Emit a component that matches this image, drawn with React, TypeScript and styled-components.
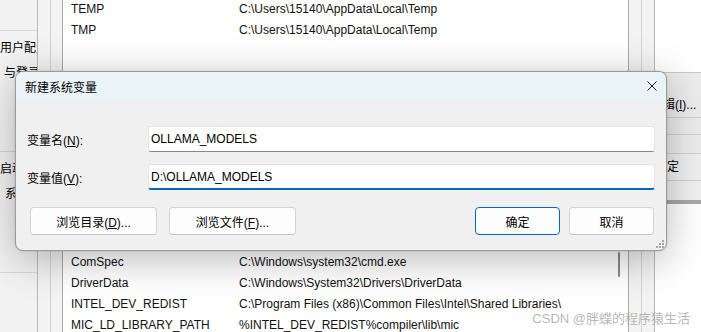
import React from "react";
import styled, { createGlobalStyle } from "styled-components";

const GlobalStyle = createGlobalStyle`
  html, body {
    margin: 0;
    padding: 0;
  }
  body {
    font-family: "Liberation Sans", "Noto Sans CJK SC", sans-serif;
    font-size: 12px;
    color: #000;
  }
`;

interface EnvVar {
  name: string;
  value: string;
}

const userVars: EnvVar[] = [
  { name: "TEMP", value: "C:\\Users\\15140\\AppData\\Local\\Temp" },
  { name: "TMP", value: "C:\\Users\\15140\\AppData\\Local\\Temp" },
];

const systemVars: EnvVar[] = [
  { name: "ComSpec", value: "C:\\Windows\\system32\\cmd.exe" },
  { name: "DriverData", value: "C:\\Windows\\System32\\Drivers\\DriverData" },
  {
    name: "INTEL_DEV_REDIST",
    value: "C:\\Program Files (x86)\\Common Files\\Intel\\Shared Libraries\\",
  },
  { name: "MIC_LD_LIBRARY_PATH", value: "%INTEL_DEV_REDIST%compiler\\lib\\mic" },
];

const Screen = styled.div`
  position: relative;
  width: 701px;
  height: 332px;
  overflow: hidden;
  display: flex;
  background: #fff;
`;

/* window behind, left edge */
const SideWindow = styled.div`
  width: 37px;
  flex: none;
  background: #f2f2f2;
  display: flex;
  flex-direction: column;
  overflow: hidden;
  white-space: nowrap;
`;

const SideSection = styled.div<{ $h: number }>`
  height: ${(p) => p.$h}px;
  flex: none;
  box-sizing: border-box;
  border-bottom: 1px solid #d6d6d6;
  padding-top: 5px;
`;

const SideText = styled.div<{ $indent?: number }>`
  line-height: 25px;
  padding-left: ${(p) => p.$indent ?? 0}px;
`;

/* environment variables window */
const EnvWindow = styled.div`
  width: 618px;
  flex: none;
  box-sizing: border-box;
  border-left: 1px solid #b8b8b8;
  border-right: 1px solid #b8b8b8;
  background: #f3f3f3;
  padding: 0 12px;
  display: flex;
`;

const GroupFrame = styled.div`
  flex: 1;
  border-left: 1px solid #d2d2d2;
  border-right: 1px solid #d2d2d2;
  padding: 0 12px 0 11px;
  display: flex;
`;

const ListBox = styled.div`
  flex: 1;
  background: #fff;
  border-left: 1px solid #a9a9a9;
  border-right: 1px solid #a9a9a9;
  display: flex;
  flex-direction: column;
`;

const VarList = styled.div<{ $top: number }>`
  position: relative;
  margin-top: ${(p) => p.$top}px;
`;

const VarRow = styled.div`
  display: grid;
  grid-template-columns: 168px 1fr;
  height: 21px;
  line-height: 21px;
  padding-left: 8px;
  white-space: nowrap;
  color: #111;
`;

const ScrollThumb = styled.div`
  position: absolute;
  right: 8px;
  top: 0;
  width: 2px;
  height: 25px;
  border-radius: 1px;
  background: #8a8a8a;
`;

/* window behind, right edge */
const BackWindow = styled.div`
  flex: 1;
  background: #fff;
  display: flex;
  flex-direction: column;
  overflow: hidden;
  white-space: nowrap;
`;

const BackBlock = styled.div<{ $h: number; $bg?: string; $line?: string }>`
  height: ${(p) => p.$h}px;
  flex: none;
  box-sizing: border-box;
  background: ${(p) => p.$bg ?? "transparent"};
  border-bottom: 1px solid ${(p) => p.$line ?? "#d0d0d0"};
  display: flex;
  align-items: flex-end;
`;

const BackLabel = styled.span<{ $shift?: number; $pad?: number }>`
  margin-left: ${(p) => p.$shift ?? 0}px;
  padding-bottom: ${(p) => p.$pad ?? 0}px;
  line-height: 16px;
`;

/* dialog */
const Dialog = styled.div`
  position: absolute;
  left: 15px;
  top: 71px;
  width: 652px;
  height: 180px;
  box-sizing: border-box;
  border: 1px solid #9c9c9c;
  border-radius: 8px;
  background: #f0f0f0;
  overflow: hidden;
  box-shadow: 0 8px 40px rgba(0, 0, 0, 0.28), 0 0 2px rgba(0, 0, 0, 0.2);
  display: flex;
  flex-direction: column;
`;

const TitleBar = styled.div`
  height: 28px;
  flex: none;
  background: #eaf3f6;
  display: flex;
  align-items: center;
  justify-content: space-between;
  padding: 0 9px 0 9px;
  font-size: 12px;
`;

const CloseButton = styled.span`
  display: flex;
  width: 10px;
  height: 10px;
`;

const DialogBody = styled.div`
  flex: 1;
  display: flex;
  flex-direction: column;
  padding: 26px 11px 0 11px;
  position: relative;
`;

const Field = styled.div`
  display: grid;
  grid-template-columns: 121px 1fr;
  align-items: center;
  height: 26px;
  & + & {
    margin-top: 12px;
  }
`;

const FieldInput = styled.input<{ $focused?: boolean }>`
  box-sizing: border-box;
  height: 26px;
  width: 100%;
  margin: 0;
  padding: 0 0 0 2px;
  font: inherit;
  color: #000;
  background: #fff;
  border: 1px solid #e4e4e4;
  border-radius: 3px;
  border-bottom: ${(p) => (p.$focused ? "2px solid #0067c0" : "1px solid #878787")};
  outline: none;
`;

const ButtonRow = styled.div`
  display: flex;
  align-items: center;
  margin-top: 17px;
  padding: 0 1px 0 3px;
`;

const ButtonGroup = styled.div<{ $gap: number }>`
  display: flex;
  gap: ${(p) => p.$gap}px;
`;

const Spacer = styled.div`
  flex: 1;
`;

const DialogButton = styled.button<{ $w: number; $primary?: boolean }>`
  width: ${(p) => p.$w}px;
  height: 28px;
  box-sizing: border-box;
  margin: 0;
  padding: 0;
  font: inherit;
  color: #000;
  background: #fdfdfd;
  border: 1px solid ${(p) => (p.$primary ? "#0a66c2" : "#d3d3d3")};
  border-bottom-color: ${(p) => (p.$primary ? "#0a66c2" : "#c2c2c2")};
  border-radius: 4px;
`;

const Grip = styled.svg`
  position: absolute;
  right: 1px;
  bottom: 1px;
`;

const Watermark = styled.div`
  position: absolute;
  right: 11px;
  bottom: 5px;
  font-family: "Liberation Sans", "Noto Sans CJK SC", sans-serif;
  font-size: 13px;
  color: rgba(170, 170, 170, 0.85);
  white-space: nowrap;
`;

const App = () => {
  return (
    <>
      <GlobalStyle />
      <Screen>
        <SideWindow>
          <SideSection $h={31} />
          <SideSection $h={121}>
            <SideText>用户配置</SideText>
            <SideText $indent={4}>与登录</SideText>
          </SideSection>
          <SideSection $h={121}>
            <SideText>启动和</SideText>
            <SideText $indent={5}>系统</SideText>
          </SideSection>
        </SideWindow>

        <EnvWindow>
          <GroupFrame>
            <ListBox>
              <VarList $top={-1}>
                {userVars.map((v) => (
                  <VarRow key={v.name}>
                    <span>{v.name}</span>
                    <span>{v.value}</span>
                  </VarRow>
                ))}
              </VarList>
              <VarList $top={211}>
                <ScrollThumb />
                {systemVars.map((v) => (
                  <VarRow key={v.name}>
                    <span>{v.name}</span>
                    <span>{v.value}</span>
                  </VarRow>
                ))}
              </VarList>
            </ListBox>
          </GroupFrame>
        </EnvWindow>

        <BackWindow>
          <BackBlock $h={73} $line="#c8c8c8">
            <BackLabel $shift={-4} style={{ marginBottom: 69 }}>s\Shared</BackLabel>
          </BackBlock>
          <BackBlock $h={45} $bg="#ececec">
            <BackLabel $shift={-4} $pad={4}>编辑(<u>I</u>)...</BackLabel>
          </BackBlock>
          <BackBlock $h={17} $bg="#ececec" />
          <BackBlock $h={19} $bg="#ececec" />
          <BackBlock $h={27} $bg="#efefef">
            <BackLabel $pad={5}>确定</BackLabel>
          </BackBlock>
          <BackBlock $h={19} $bg="#f0f0f0" $line="#f0f0f0" />
          <BackBlock $h={4} $bg="#a8a8a8" $line="#a8a8a8" />
        </BackWindow>

        <Dialog>
          <TitleBar>
            <span>新建系统变量</span>
            <CloseButton>
              <svg width="10" height="10" viewBox="0 0 10 10">
                <path d="M0.5 0.5 L9.5 9.5 M9.5 0.5 L0.5 9.5" stroke="#1a1a1a" strokeWidth="1" />
              </svg>
            </CloseButton>
          </TitleBar>
          <DialogBody>
            <Field>
              <span>
                变量名(<u>N</u>):
              </span>
              <FieldInput readOnly value="OLLAMA_MODELS" />
            </Field>
            <Field>
              <span>
                变量值(<u>V</u>):
              </span>
              <FieldInput $focused readOnly value="D:\OLLAMA_MODELS" />
            </Field>
            <ButtonRow>
              <ButtonGroup $gap={12}>
                <DialogButton $w={127}>
                  浏览目录(<u>D</u>)...
                </DialogButton>
                <DialogButton $w={127}>
                  浏览文件(<u>F</u>)...
                </DialogButton>
              </ButtonGroup>
              <Spacer />
              <ButtonGroup $gap={9}>
                <DialogButton $w={85} $primary>
                  确定
                </DialogButton>
                <DialogButton $w={85}>取消</DialogButton>
              </ButtonGroup>
            </ButtonRow>
            <Grip width="10" height="10" viewBox="0 0 10 10">
              {[
                [7, 1],
                [4, 4],
                [7, 4],
                [1, 7],
                [4, 7],
                [7, 7],
              ].map(([x, y]) => (
                <rect key={`${x}-${y}`} x={x} y={y} width="2" height="2" fill="#a8a8a8" />
              ))}
            </Grip>
          </DialogBody>
        </Dialog>

        <Watermark>CSDN @胖蝶的程序猿生活</Watermark>
      </Screen>
    </>
  );
};

export default App;
